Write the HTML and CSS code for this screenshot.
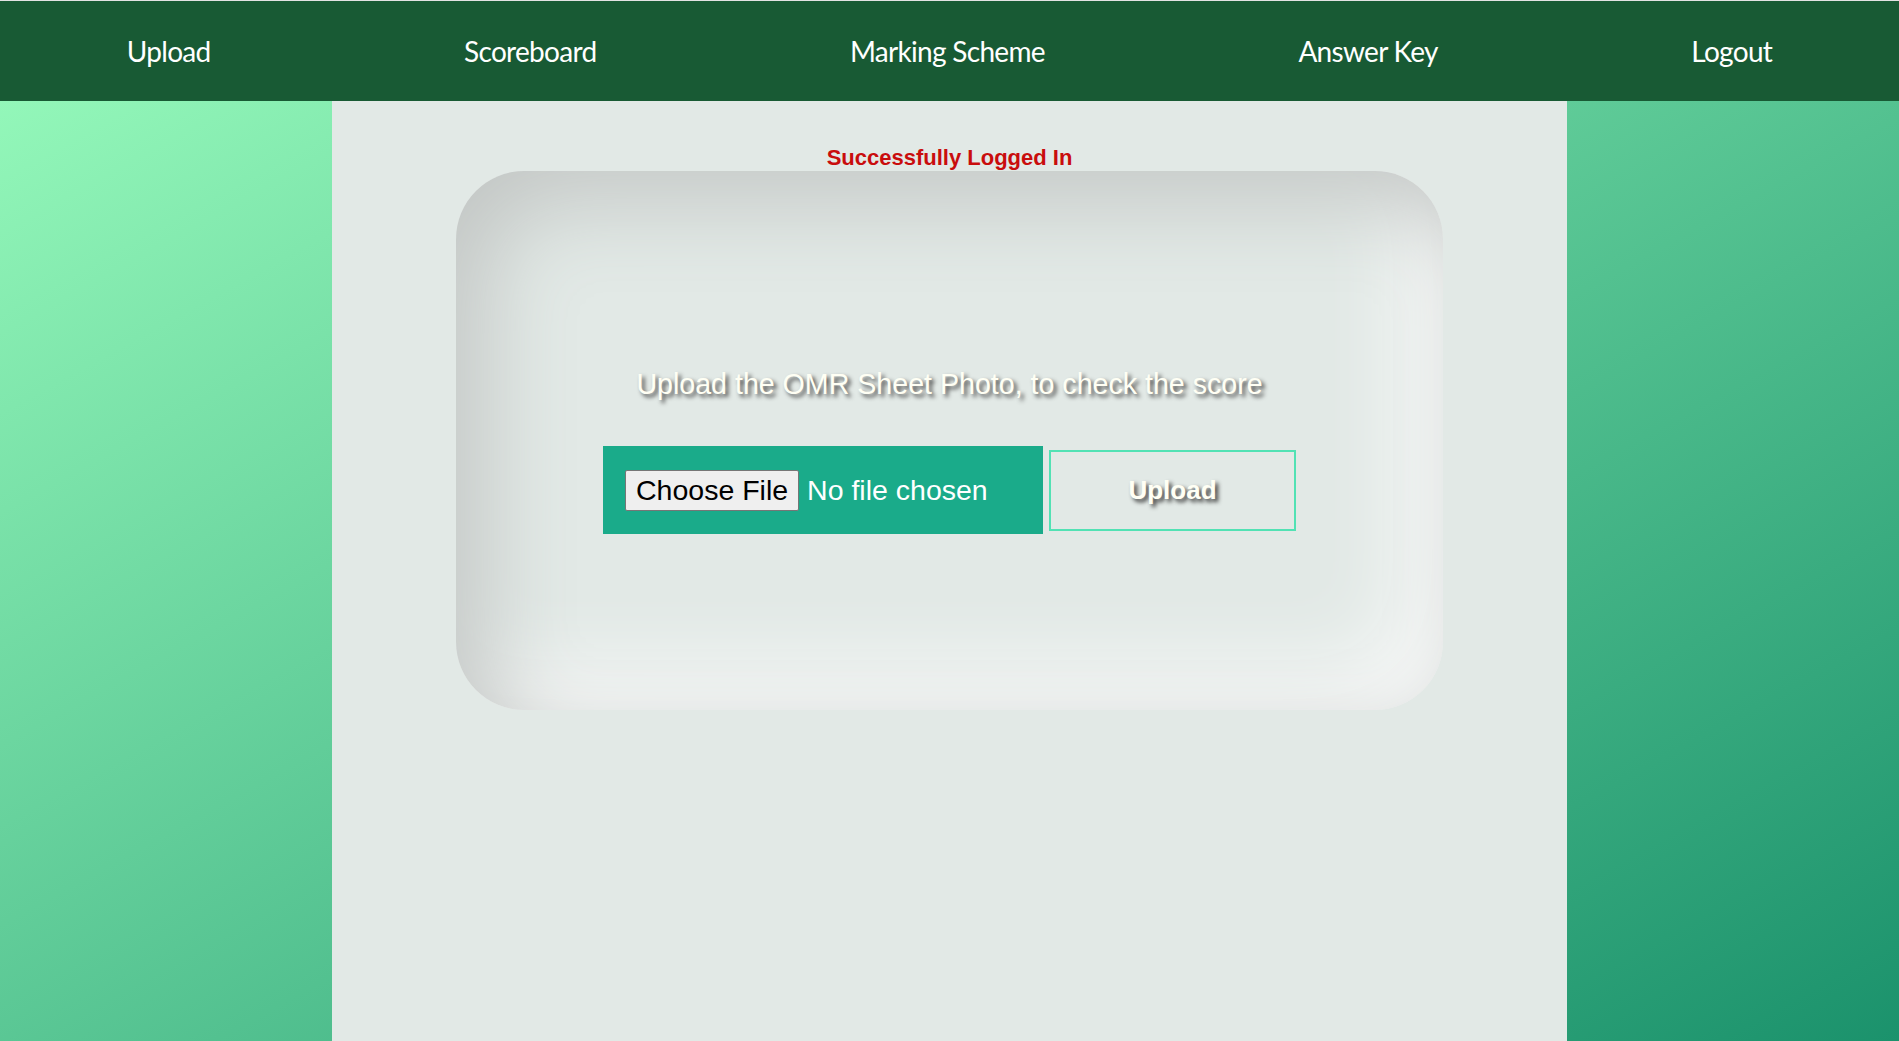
FILE: index.html
```html
<!DOCTYPE html>
<html lang="en">
<head>
<meta charset="utf-8">
<title>OMR Upload</title>
<link rel="stylesheet" href="styles.css">
</head>
<body>
  <nav class="topnav">
    <a class="nav-link" href="#">Upload</a>
    <a class="nav-link" href="#">Scoreboard</a>
    <a class="nav-link" href="#">Marking Scheme</a>
    <a class="nav-link" href="#">Answer Key</a>
    <a class="nav-link" href="#">Logout</a>
  </nav>
  <main class="panel">
    <p class="status">Successfully Logged In</p>
    <section class="card">
      <h2 class="card-title">Upload the OMR Sheet Photo, to check the score</h2>
      <form class="upload-row">
        <div class="file-box">
          <input class="file-input" type="file" name="sheet">
        </div>
        <button class="upload-btn" type="button">Upload</button>
      </form>
    </section>
  </main>
</body>
</html>
```
FILE: styles.css
```css
html, body {
  margin: 0;
  padding: 0;
}

body {
  min-height: 100vh;
  box-sizing: border-box;
  border-top: 1px solid #e3e3e3;
  background: linear-gradient(to bottom right, #99fcbd, #1b926c);
  font-family: "Liberation Sans", Arial, sans-serif;
  display: flex;
  flex-direction: column;
}

.topnav {
  height: 100px;
  background: #185a34;
  display: flex;
  justify-content: space-around;
  align-items: center;
}

.nav-link {
  font-family: Lato, "Open Sans", sans-serif;
  font-size: 28px;
  letter-spacing: -0.7px;
  color: #ffffff;
  text-decoration: none;
}

.panel {
  flex: 1;
  width: 65%;
  margin: 0 auto;
  background: #e2e9e6;
  padding-top: 44px;
  box-sizing: border-box;
}

.status {
  margin: 0;
  text-align: center;
  color: #c90d0d;
  font-weight: bold;
  font-size: 22px;
}

.card {
  width: 80%;
  height: 539px;
  margin: 0 auto;
  box-sizing: border-box;
  padding-top: 197px;
  border-radius: 68px;
  background: #e2e9e6;
  box-shadow: inset 30px 30px 90px #c2c6c4, inset -30px -30px 90px #fdfdfd;
}

.card-title {
  margin: 0 0 45px;
  text-align: center;
  font-weight: normal;
  font-size: 28.6px;
  color: #fffff4;
  text-shadow: 3px 3px 4px #3d3d3d;
}

.upload-row {
  display: flex;
  justify-content: center;
  align-items: center;
  gap: 6px;
}

.file-box {
  width: 440px;
  height: 88px;
  box-sizing: border-box;
  padding: 0 22px;
  background: #1aab8a;
  display: flex;
  align-items: center;
}

.file-input {
  font-family: "Liberation Sans", Arial, sans-serif;
  font-size: 28.5px;
  color: #ffffff;
  width: 100%;
}

.file-input::file-selector-button {
  font: inherit;
  height: 41px;
  padding: 0 10px;
  margin-right: 8px;
  border: 1px solid #767676;
  border-radius: 2px;
  background: #efefef;
  color: #000000;
}

.upload-btn {
  width: 247px;
  height: 81px;
  border: 2px solid #52e2b4;
  background: transparent;
  font-family: "Liberation Sans", Arial, sans-serif;
  font-weight: bold;
  font-size: 26px;
  color: #fffff4;
  text-shadow: 3px 3px 4px #333333;
}
```
